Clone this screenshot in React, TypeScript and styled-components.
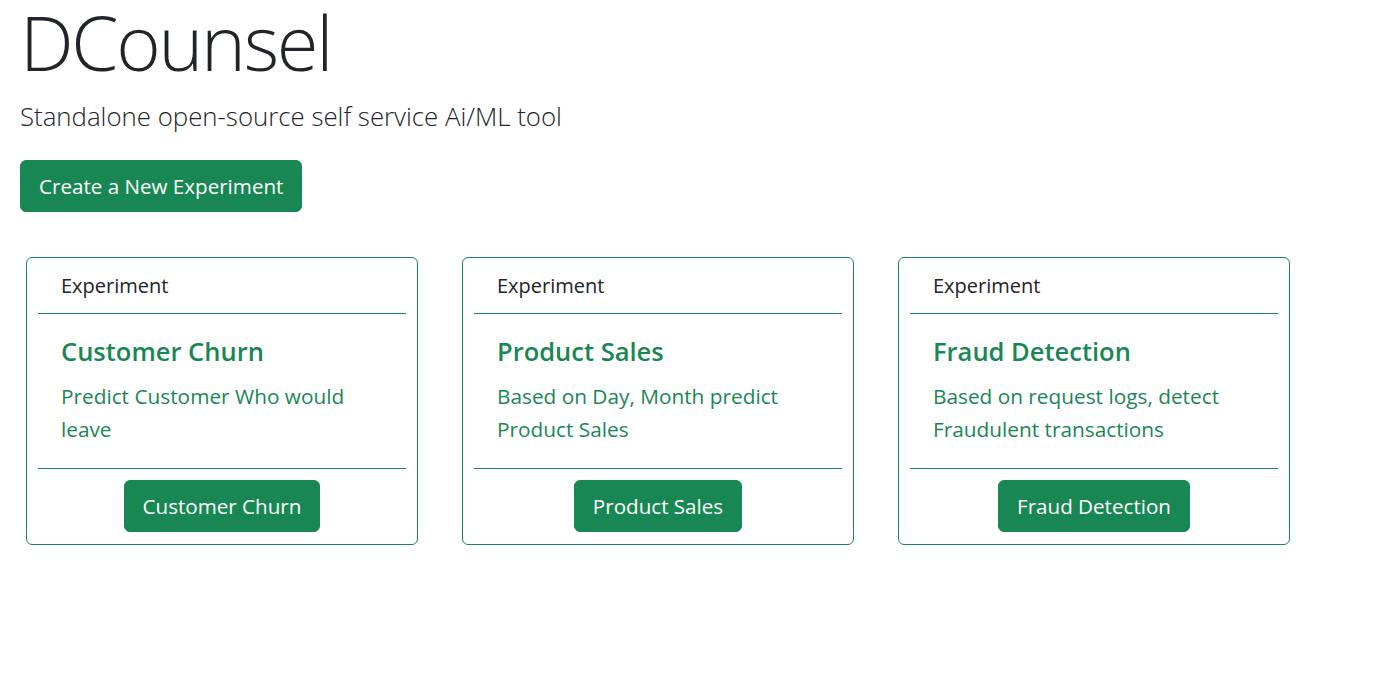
import React from "react";
import styled, { createGlobalStyle } from "styled-components";

const GlobalStyle = createGlobalStyle`
  html, body { margin: 0; padding: 0; background: #fff; }
  body {
    font-family: "Open Sans", "Noto Sans", sans-serif;
    color: #212529;
  }
`;

const Page = styled.main`
  padding: 0 20px;
`;

const Title = styled.h1`
  margin: 0;
  font-size: 76px;
  font-weight: 300;
  line-height: 1.1;
  letter-spacing: -2.3px;
  color: #212529;
`;

const Lead = styled.p`
  margin: 13px 0 0;
  font-size: 25.8px;
  font-weight: 300;
  line-height: 1.5;
  color: #212529;
`;

const Button = styled.button`
  font-family: inherit;
  font-size: 20.6px;
  line-height: 30px;
  padding: 10px 18px;
  color: #fff;
  background: #198754;
  border: 1px solid #198754;
  border-radius: 6px;
  cursor: pointer;
`;

const Actions = styled.div`
  margin-top: 25px;
`;

const Cards = styled.section`
  display: flex;
  gap: 44px;
  margin: 45px 0 0 6px;
`;

const Card = styled.article`
  width: 392px;
  box-sizing: border-box;
  border: 1px solid #198754;
  border-radius: 6px;
  display: flex;
  flex-direction: column;
`;

const CardHeader = styled.div`
  margin: 0 11px;
  padding: 14px 23px;
  font-size: 20px;
  line-height: 27px;
  color: #212529;
  border-bottom: 1px solid #198754;
`;

const CardBody = styled.div`
  padding: 22px 34px 22px;
  color: #198754;
`;

const CardTitle = styled.h5`
  margin: 0 0 13px;
  font-size: 25.5px;
  font-weight: 600;
  line-height: 31px;
`;

const CardText = styled.p`
  margin: 0;
  font-size: 20.8px;
  line-height: 33px;
`;

const CardFooter = styled.div`
  margin: 0 11px;
  padding: 11px 0 12px;
  border-top: 1px solid #198754;
  display: flex;
  justify-content: center;
`;

const experiments = [
  { title: "Customer Churn", text: "Predict Customer Who would leave" },
  { title: "Product Sales", text: "Based on Day, Month predict Product Sales" },
  { title: "Fraud Detection", text: "Based on request logs, detect Fraudulent transactions" },
];

export default function App() {
  return (
    <>
      <GlobalStyle />
      <Page>
        <Title>DCounsel</Title>
        <Lead>Standalone open-source self service Ai/ML tool</Lead>
        <Actions>
          <Button>Create a New Experiment</Button>
        </Actions>
        <Cards>
          {experiments.map((e) => (
            <Card key={e.title}>
              <CardHeader>Experiment</CardHeader>
              <CardBody>
                <CardTitle>{e.title}</CardTitle>
                <CardText>{e.text}</CardText>
              </CardBody>
              <CardFooter>
                <Button>{e.title}</Button>
              </CardFooter>
            </Card>
          ))}
        </Cards>
      </Page>
    </>
  );
}
